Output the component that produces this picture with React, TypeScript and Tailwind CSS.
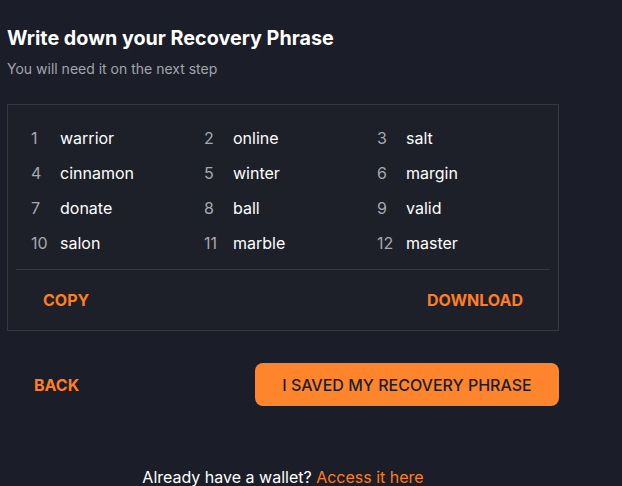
const words = [
  "warrior", "online", "salt",
  "cinnamon", "winter", "margin",
  "donate", "ball", "valid",
  "salon", "marble", "master",
];

export default function App() {
  return (
    <div className="min-h-screen w-full bg-[#1b1d28] font-['Inter',sans-serif] overflow-hidden">
      <div className="ml-[7px] w-[552px] pt-[26px]">
        <h1 className="text-[19.75px] leading-[24px] font-bold text-white">Write down your Recovery Phrase</h1>
        <p className="mt-[9px] text-[14px] leading-[20px] text-[#a3a5ad]">You will need it on the next step</p>

        <div className="mt-[25px] border border-[#363843] bg-[#1e2029] px-[8px]">
          <div className="grid grid-cols-[173px_173px_173px] pl-[15px] pt-[15px] pb-[9px]">
            {words.map((w, i) => (
              <div key={w} className="flex items-center h-[35px] text-[16px] leading-[20px]">
                <span className="w-[29px] text-[#a6a8b0]">{i + 1}</span>
                <span className="text-white">{w}</span>
              </div>
            ))}
          </div>
          <div className="border-t border-[#363843] flex justify-between items-center h-[61px] px-[27px]">
            <button className="text-[16px] font-bold text-[#ff7d24]">COPY</button>
            <button className="text-[16px] font-bold text-[#ff7d24]">DOWNLOAD</button>
          </div>
        </div>

        <div className="mt-[32px] flex items-center justify-between">
          <button className="ml-[27px] text-[16px] font-bold text-[#ff7d24]">BACK</button>
          <button className="w-[304px] h-[43px] rounded-[8px] bg-[#ff852d] text-[16px] font-medium text-[#1b1d28]">
            I SAVED MY RECOVERY PHRASE
          </button>
        </div>

        <p className="mt-[60px] text-center text-[16px] leading-[22px] text-white">
          Already have a wallet? <span className="text-[#ff7d24]">Access it here</span>
        </p>
      </div>
    </div>
  );
}
